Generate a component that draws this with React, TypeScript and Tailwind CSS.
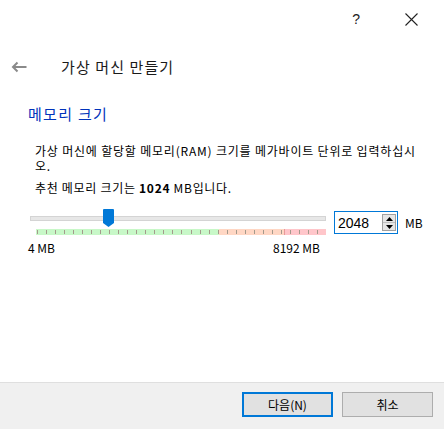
import React from 'react'

const font = { fontFamily: '"Noto Sans CJK KR", "Noto Sans", sans-serif' }

// tick marks on the recommended-range bar
const ticks = Array.from({ length: 32 }, (_, i) => 1 + i * 9.03)

function RangeBar() {
  return (
    <svg width="290" height="6" viewBox="0 0 290 6" className="block">
      <rect x="0" y="0" width="183" height="6" fill="#c8f8c8" />
      <rect x="183" y="0" width="65" height="6" fill="#ffd7c4" />
      <rect x="248" y="0" width="42" height="6" fill="#ffc6ca" />
      <rect x="248" y="0" width="1" height="6" fill="#e89a9a" />
      {ticks.map((x) => (
        <rect key={x} x={Math.round(x)} y="1" width="1" height="4" fill="#a49a8c" />
      ))}
    </svg>
  )
}

function SpinBox() {
  return (
    <div className="w-[64px] h-[23px] border border-[#0078d7] flex items-center justify-between pl-[3px] pr-[1px] bg-white">
      <span className="text-[14px] leading-[20px] text-black" style={{ fontFamily: '"Liberation Sans", sans-serif' }}>
        2048
      </span>
      <div className="flex flex-col w-[14px] h-[17px] border border-[#a0a0a0] bg-[#e6e6e6]">
        <div className="flex-1 flex items-center justify-center border-b border-[#c0c0c0]">
          <svg width="7" height="4" viewBox="0 0 7 4">
            <polygon points="0,4 7,4 3.5,0" fill="#000" />
          </svg>
        </div>
        <div className="flex-1 flex items-center justify-center">
          <svg width="7" height="4" viewBox="0 0 7 4">
            <polygon points="0,0 7,0 3.5,4" fill="#000" />
          </svg>
        </div>
      </div>
    </div>
  )
}

export default function App() {
  return (
    <div className="w-[444px] h-[429px] bg-white flex flex-col text-black" style={font}>
      {/* window buttons */}
      <div className="h-[38px] flex items-center justify-end">
        <span className="text-[14px] leading-[16px] text-[#222] mr-[45px]" style={{ fontFamily: '"Liberation Sans", sans-serif' }}>
          ?
        </span>
        <svg width="13" height="13" viewBox="0 0 13 13" className="mr-[26px]">
          <path d="M0.5 0.5 L12.5 12.5 M12.5 0.5 L0.5 12.5" stroke="#222" strokeWidth="1.1" />
        </svg>
      </div>

      {/* title */}
      <div className="mt-[19px] h-[20px] flex items-center">
        <svg width="16" height="12" viewBox="0 0 16 12" className="ml-[11px]">
          <path d="M15.5 6 H2 M6.5 1.5 L2 6 L6.5 10.5" stroke="#8a8a8a" strokeWidth="2" fill="none" />
        </svg>
        <span className="ml-[34px] text-[15px] leading-[20px] tracking-[1.1px] text-[#1a1a1a]">가상 머신 만들기</span>
      </div>

      <div className="px-[28px]">
        <div className="mt-[27px] text-[15px] leading-[20px] tracking-[1.3px] text-[#0033bb]">메모리 크기</div>

        <div className="mt-[19px] pl-[7px] text-[12px] leading-[15px] tracking-[0.8px] whitespace-nowrap">
          가상 머신에 할당할 메모리(RAM) 크기를 메가바이트 단위로 입력하십시
          <br />
          오.
        </div>

        <div className="mt-[8px] pl-[7px] text-[12px] leading-[13px] tracking-[0.7px] whitespace-nowrap">
          추천 메모리 크기는 <b className="font-bold">1024</b> MB입니다.
        </div>

        {/* slider row */}
        <div className="mt-[17px] flex items-start">
          <div className="ml-[2px] w-[301px]">
            <div className="relative pt-[5px]">
              <div className="h-[5px] border border-[#d4d4d4] bg-[#e7e7e7]" />
              <svg width="11" height="18" viewBox="0 0 11 18" className="absolute left-[73px] top-[-2px]">
                <path d="M1 0 H10 Q11 0 11 1 V14 L5.5 18 L0 14 V1 Q0 0 1 0 Z" fill="#0078d7" />
              </svg>
              <div className="mt-[8px] ml-[6px]">
                <RangeBar />
              </div>
            </div>
            <div className="mt-[6px] -ml-[2px] w-[292px] flex justify-between text-[12px] leading-[13px]">
              <span>4 MB</span>
              <span>8192 MB</span>
            </div>
          </div>
          <div className="ml-[8px]">
            <SpinBox />
          </div>
          <span className="ml-[7px] mt-[5px] text-[12px] leading-[13px]">MB</span>
        </div>
      </div>

      {/* footer */}
      <div className="mt-auto h-[47px] border-t border-[#dfdfdf] bg-[#f0f0f0] flex justify-end items-start pt-[9px] pr-[11px] gap-[9px]">
        <button className="w-[91px] h-[25px] border-2 border-[#0078d7] bg-[#e1e1e1] text-[12px] leading-[14px] text-black">
          다음(N)
        </button>
        <button className="w-[91px] h-[25px] border border-[#adadad] bg-[#e1e1e1] text-[12px] leading-[14px] text-black">
          취소
        </button>
      </div>
    </div>
  )
}
